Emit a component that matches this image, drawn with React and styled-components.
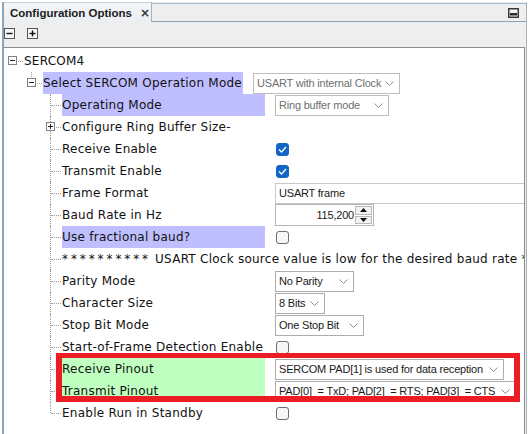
import React from 'react';
import styled, { createGlobalStyle } from 'styled-components';

const GlobalStyle = createGlobalStyle`
  html, body {
    margin: 0;
    padding: 0;
    background: #fff;
  }
  body {
    width: 528px;
    height: 434px;
    overflow: hidden;
  }
`;

const Page = styled.div`
  box-sizing: border-box;
  width: 528px;
  height: 434px;
  padding: 2px 1px 0 2px;
  background: #fff;
  display: flex;
`;

const Panel = styled.div`
  flex: 1;
  display: flex;
  flex-direction: column;
  min-width: 0;
  background: #eeeeee;
  border-left: 2px solid #8ea5b6;
  border-right: 1px solid #9fb3c1;
`;

const TabStrip = styled.div`
  display: flex;
  height: 20px;
`;

const Tab = styled.div`
  box-sizing: border-box;
  width: 148px;
  height: 20px;
  padding: 0 0 0 6px;
  display: flex;
  align-items: center;
  gap: 8px;
  background: linear-gradient(#f3f5f7, #eceff2);
  border-top: 1px solid #c4ced6;
  border-right: 1px solid #9fb3c1;
  font: bold 11.5px 'Liberation Sans', Arial, sans-serif;
  color: #1b1b1b;
`;

const CloseMark = styled.span`
  font: bold 12px 'DejaVu Sans', sans-serif;
  color: #333;
  line-height: 1;
`;

const TabFill = styled.div`
  flex: 1;
  margin-top: 1px;
  border-top: 1px solid #a6b8c5;
  border-bottom: 1px solid #8aa2b3;
  display: flex;
  align-items: center;
  justify-content: flex-end;
  padding-right: 7px;
`;

const Toolbar = styled.div`
  height: 25px;
  display: flex;
  align-items: flex-start;
  gap: 12px;
  padding: 6px 0 0 0;
  box-sizing: border-box;
`;

const ToolButton = styled.span`
  display: flex;
  width: 11px;
  height: 11px;
`;

const Content = styled.div`
  position: relative;
  flex: 1;
  margin-right: 1px;
  background: #fff;
  border-top: 1px solid #8c8c8c;
  border-right: 1px solid #8c8c8c;
  padding-top: 2px;
  overflow: hidden;
`;

const Row = styled.div`
  display: flex;
  align-items: center;
  height: 22px;
  white-space: nowrap;
`;

const Indent = styled.span`
  flex: 0 0 ${p => p.$depth * 19}px;
`;

const Elbow = styled.span`
  position: relative;
  flex: 0 0 20px;
  height: 22px;

  &::before {
    content: '';
    display: ${p => (p.$root ? 'none' : 'block')};
    position: absolute;
    left: 8px;
    top: 0;
    height: ${p => (p.$last ? '11px' : '22px')};
    border-left: 1px dotted #9a9a9a;
  }

  &::after {
    content: '';
    position: absolute;
    left: 9px;
    right: 1px;
    top: 11px;
    border-top: 1px dotted #9a9a9a;
  }
`;

const Expander = styled.span`
  position: absolute;
  left: 4px;
  top: 6px;
  z-index: 1;
  display: flex;
  width: 9px;
  height: 9px;
`;

const highlights = {
  blue: '#bfbfff',
  green: '#bfffbf',
};

const Label = styled.span`
  flex: 0 0 auto;
  width: ${p => (p.$w ? `${p.$w}px` : 'auto')};
  height: 22px;
  display: flex;
  align-items: center;
  background: ${p => highlights[p.$hl] || 'transparent'};
  font: 12px 'DejaVu Sans', Verdana, sans-serif;
  letter-spacing: 0.25px;
  color: #111;
  white-space: pre;
`;

const Stars = styled.span`
  letter-spacing: 2.9px;
`;

const Value = styled.span`
  flex: 0 0 auto;
  margin-left: 10px;
  display: flex;
  align-items: center;
`;

const controlFont = `11px 'Liberation Sans', Arial, sans-serif`;

const Dropdown = styled.div`
  box-sizing: border-box;
  width: ${p => p.$w}px;
  height: 21px;
  padding: 0 5px 0 3px;
  display: flex;
  align-items: center;
  justify-content: space-between;
  background: #fff;
  border: 1px solid ${p => (p.$disabled ? '#bdbdbd' : '#adadad')};
  font: ${controlFont};
  letter-spacing: -0.2px;
  color: ${p => (p.$disabled ? '#6f6f6f' : '#1a1a1a')};
`;

const TextField = styled.div`
  box-sizing: border-box;
  width: 262px;
  height: 21px;
  padding: 0 3px;
  display: flex;
  align-items: center;
  border: 1px solid #c9c9c9;
  font: ${controlFont};
  letter-spacing: -0.2px;
  color: #1a1a1a;
`;

const Spinner = styled.div`
  box-sizing: border-box;
  width: 99px;
  height: 22px;
  display: flex;
  border: 1px solid #b5b5b5;
`;

const SpinText = styled.span`
  flex: 1;
  display: flex;
  align-items: center;
  justify-content: flex-end;
  padding-right: 1px;
  font: ${controlFont};
  letter-spacing: -0.2px;
  color: #1a1a1a;
`;

const SpinButtons = styled.span`
  width: 17px;
  display: flex;
  flex-direction: column;
  gap: 1px;
  padding: 1px 1px 1px 0;
`;

const SpinButton = styled.span`
  flex: 1;
  display: flex;
  align-items: center;
  justify-content: center;
  background: #f2f2f2;
  border: 1px solid #b9b9b9;
`;

const Check = styled.span`
  box-sizing: border-box;
  width: 13px;
  height: 13px;
  margin-left: 1px;
  border-radius: 3px;
  display: flex;
  align-items: center;
  justify-content: center;
  background: ${p => (p.$checked ? '#1366c4' : '#f6f6f6')};
  border: 1px solid ${p => (p.$checked ? '#1366c4' : '#6e6e6e')};
`;

const Callout = styled.div`
  position: absolute;
  left: 52px;
  top: 305px;
  width: 464px;
  height: 49px;
  box-sizing: border-box;
  border: 6px solid #ec1c24;
  border-top-width: 5px;
  pointer-events: none;
`;

const Chevron = () => (
  <svg width="9" height="5" viewBox="0 0 9 5">
    <polyline points="0.5,0.5 4.5,4.5 8.5,0.5" fill="none" stroke="#8c8c8c" strokeWidth="1" />
  </svg>
);

const BoxIcon = ({ plus }) => (
  <svg width="9" height="9" viewBox="0 0 9 9">
    <rect x="0.5" y="0.5" width="8" height="8" fill="#fff" stroke="#808080" />
    <line x1="2" y1="4.5" x2="7" y2="4.5" stroke="#222" />
    {plus && <line x1="4.5" y1="2" x2="4.5" y2="7" stroke="#222" />}
  </svg>
);

const ToolIcon = ({ plus }) => (
  <svg width="11" height="11" viewBox="0 0 11 11">
    <rect x="0.5" y="0.5" width="10" height="10" fill="#f7f7f7" stroke="#555" />
    <line x1="2.5" y1="5.5" x2="8.5" y2="5.5" stroke="#111" strokeWidth="1.4" />
    {plus && <line x1="5.5" y1="2.5" x2="5.5" y2="8.5" stroke="#111" strokeWidth="1.4" />}
  </svg>
);

const MinimizeIcon = () => (
  <svg width="11" height="10" viewBox="0 0 11 10">
    <rect x="0.75" y="0.75" width="9.5" height="8.5" fill="#f4f4f4" stroke="#3a3a3a" strokeWidth="1.5" />
    <rect x="2" y="5" width="7" height="2.5" fill="#2a2a2a" />
  </svg>
);

const Tick = () => (
  <svg width="9" height="7" viewBox="0 0 9 7">
    <polyline points="1,3.5 3.5,6 8,1" fill="none" stroke="#fff" strokeWidth="1.3" />
  </svg>
);

const Arrow = ({ down }) => (
  <svg width="7" height="4" viewBox="0 0 7 4">
    <polygon points={down ? '0,0 7,0 3.5,4' : '0,4 7,4 3.5,0'} fill="#111" />
  </svg>
);

const warning = (
  <>
    <Stars>**********</Stars> USART Clock source value is low for the desired baud rate <Stars>**</Stars>
  </>
);

const rows = [
  { depth: 0, label: 'SERCOM4', expander: 'minus', root: true },
  {
    depth: 1, label: 'Select SERCOM Operation Mode', expander: 'minus', last: true, hl: 'blue', w: 200,
    value: { kind: 'select', text: 'USART with internal Clock', w: 147, disabled: true },
  },
  { depth: 2, label: 'Operating Mode', hl: 'blue', value: { kind: 'select', text: 'Ring buffer mode', w: 114, disabled: true } },
  { depth: 2, label: 'Configure Ring Buffer Size-', expander: 'plus' },
  { depth: 2, label: 'Receive Enable', value: { kind: 'check', checked: true } },
  { depth: 2, label: 'Transmit Enable', value: { kind: 'check', checked: true } },
  { depth: 2, label: 'Frame Format', value: { kind: 'text', text: 'USART frame' } },
  { depth: 2, label: 'Baud Rate in Hz', value: { kind: 'spin', text: '115,200' } },
  { depth: 2, label: 'Use fractional baud?', hl: 'blue', value: { kind: 'check' } },
  { depth: 2, label: warning, free: true },
  { depth: 2, label: 'Parity Mode', value: { kind: 'select', text: 'No Parity', w: 79 } },
  { depth: 2, label: 'Character Size', value: { kind: 'select', text: '8 Bits', w: 50 } },
  { depth: 2, label: 'Stop Bit Mode', value: { kind: 'select', text: 'One Stop Bit', w: 89 } },
  { depth: 2, label: 'Start-of-Frame Detection Enable', value: { kind: 'check' } },
  { depth: 2, label: 'Receive Pinout', hl: 'green', value: { kind: 'select', text: 'SERCOM PAD[1] is used for data reception', w: 229 } },
  { depth: 2, label: 'Transmit Pinout', hl: 'green', value: { kind: 'select', text: 'PAD[0]  = TxD; PAD[2]  = RTS; PAD[3]  = CTS', w: 241 } },
  { depth: 2, label: 'Enable Run in Standby', last: true, value: { kind: 'check' } },
];

function Control({ v }) {
  switch (v.kind) {
    case 'select':
      return (
        <Dropdown $w={v.w} $disabled={v.disabled}>
          <span style={{ whiteSpace: 'pre' }}>{v.text}</span>
          <Chevron />
        </Dropdown>
      );
    case 'check':
      return <Check $checked={v.checked}>{v.checked && <Tick />}</Check>;
    case 'text':
      return <TextField>{v.text}</TextField>;
    case 'spin':
      return (
        <Spinner>
          <SpinText>{v.text}</SpinText>
          <SpinButtons>
            <SpinButton><Arrow /></SpinButton>
            <SpinButton><Arrow down /></SpinButton>
          </SpinButtons>
        </Spinner>
      );
    default:
      return null;
  }
}

function TreeRow({ row }) {
  return (
    <Row>
      <Indent $depth={row.depth} />
      <Elbow $root={row.root} $last={row.last}>
        {row.expander && (
          <Expander>
            <BoxIcon plus={row.expander === 'plus'} />
          </Expander>
        )}
      </Elbow>
      <Label $hl={row.hl} $w={row.root || row.free || !row.value ? null : row.w || 203}>
        {row.label}
      </Label>
      {row.value && (
        <Value>
          <Control v={row.value} />
        </Value>
      )}
    </Row>
  );
}

export default function App() {
  return (
    <>
      <GlobalStyle />
      <Page>
        <Panel>
          <TabStrip>
            <Tab>
              Configuration Options
              <CloseMark>×</CloseMark>
            </Tab>
            <TabFill>
              <MinimizeIcon />
            </TabFill>
          </TabStrip>
          <Toolbar>
            <ToolButton><ToolIcon /></ToolButton>
            <ToolButton><ToolIcon plus /></ToolButton>
          </Toolbar>
          <Content>
            {rows.map((row, i) => (
              <TreeRow key={i} row={row} />
            ))}
            <Callout />
          </Content>
        </Panel>
      </Page>
    </>
  );
}
